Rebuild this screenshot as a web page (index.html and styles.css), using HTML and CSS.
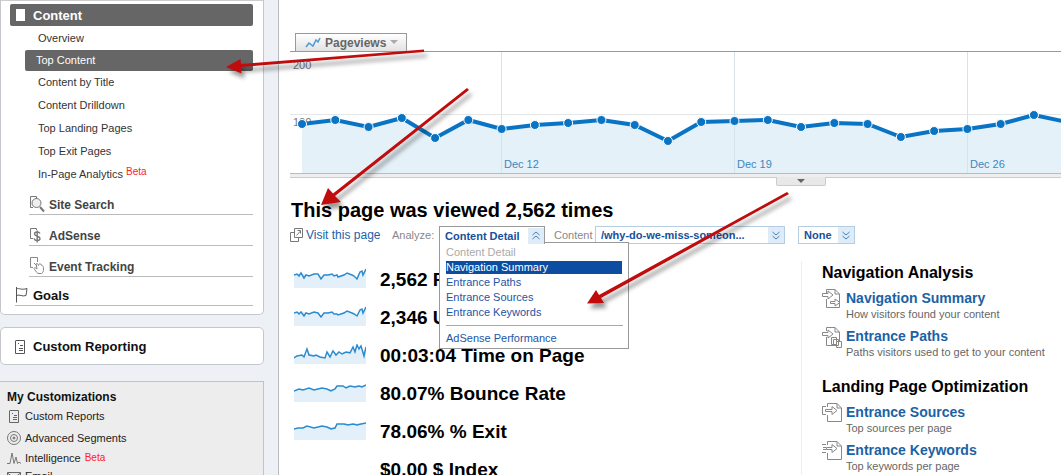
FILE: index.html
```
<!DOCTYPE html>
<html lang="en">
<head>
    <meta charset="UTF-8">
    <meta name="viewport" content="width=device-width, initial-scale=1.0">
    <title>Content Detail - Analytics</title>
    <link rel="stylesheet" href="styles.css">
</head>
<body>

<div class="page">
    <aside class="sidebar">
        <nav class="panel report-nav">
            <a href="#" class="section-link active">
                <svg class="icon" width="12" height="14"><rect x="1" y="1" width="9" height="12" fill="#fff"/></svg>
                Content
            </a>
            <ul class="sub-links">
                <li><a href="#">Overview</a></li>
                <li class="selected"><a href="#">Top Content</a></li>
                <li><a href="#">Content by Title</a></li>
                <li><a href="#">Content Drilldown</a></li>
                <li><a href="#">Top Landing Pages</a></li>
                <li><a href="#">Top Exit Pages</a></li>
                <li><a href="#">In-Page Analytics <sup class="beta">Beta</sup></a></li>
            </ul>
            <a href="#" class="group-link">
                <svg class="icon" width="16" height="18" fill="none" stroke="#777">
                    <path d="M4 12.500H1.500V1.500H7.500V4"/>
                    <circle cx="7.500" cy="8" r="4.500" fill="#e4e4e4" fill-opacity=".6"/>
                    <path d="M11 12l4 4.500" stroke-width="2"/>
                </svg>
                Site Search
            </a>
            <a href="#" class="group-link">
                <svg class="icon" width="16" height="18" fill="none" stroke="#777">
                    <path d="M4 12.500H1.500V2.500H7.500V4"/>
                    <path d="M11 7.500C10 5.500 5.500 5.500 5.500 8S11 10 11 12.500S6 15.500 5 12.500M8.200 4.500V16.500" stroke-width="1.400"/>
                </svg>
                AdSense
            </a>
            <a href="#" class="group-link">
                <svg class="icon" width="16" height="18" fill="none" stroke="#888">
                    <path d="M4 10.500H1.500V.5H8.500V5"/>
                    <path d="M5 6l3 3M9 16.500C7 15 6 13 5 11.500C5.500 10 7 11 8 12L7 7C8 5.500 9 7 9.500 8.500C10 6 12 6.500 12 8C14 8 14.500 10 14.500 12C14.500 14 14 16 12.500 16.500Z" fill="#fff"/>
                </svg>
                Event Tracking
            </a>
            <a href="#" class="section-link goals">
                <svg class="icon" width="14" height="16" fill="none" stroke="#555">
                    <path d="M1.500 0V15.500M1.500 2C4 .5 6 3.500 12 1.500L11 8.500C7 10 5 7 1.500 8.500"/>
                </svg>
                Goals
            </a>
        </nav>

        <div class="panel reporting">
            <a href="#" class="section-link">
                <svg class="icon" width="12" height="14" fill="none" stroke="#555">
                    <path d="M1 .5H9.500V13.500H.5V.5M3 3.500H4M5 5.500H8M4 8.500H8M4 10.500H8"/>
                </svg>
                Custom Reporting
            </a>
        </div>

        <div class="customizations">
            <h2>My Customizations</h2>
            <ul>
                <li><a href="#">
                    <svg class="icon" width="14" height="14" fill="none" stroke="#666">
                        <path d="M3 1.500H11.500V13.500H2.500V1.500M5 4.500H6M7 6.500H10M6 8.500H10M6 10.500H10"/>
                    </svg>
                    Custom Reports
                </a></li>
                <li><a href="#">
                    <svg class="icon" width="14" height="14" fill="none" stroke="#777">
                        <circle cx="7" cy="7" r="6.500"/><circle cx="7" cy="7" r="3.500"/><circle cx="7" cy="7" r="1" fill="#777"/>
                    </svg>
                    Advanced Segments
                </a></li>
                <li class="compact"><a href="#">
                    <svg class="icon" width="14" height="14" fill="none" stroke="#777">
                        <path d="M0 12.500H3L5 2L7 12.500L9 6L10.500 12.500L12 11L14 12.500"/>
                    </svg>
                    Intelligence <sup class="beta">Beta</sup>
                </a></li>
                <li class="compact"><a href="#">
                    <svg class="icon" width="14" height="14" fill="none" stroke="#666">
                        <path d="M.5 3.500H13.500V12.500H.5ZM.5 4L7 9L13.500 4"/>
                    </svg>
                    Email
                </a></li>
            </ul>
        </div>
    </aside>

    <main class="report">
        <button type="button" class="graph-tab">
            <svg width="16" height="12" fill="none" stroke="#4d9bd3" stroke-width="1.500"><path d="M1 10L4 6L8 9L11 3L13 5L15 1"/></svg>
            Pageviews
            <svg width="8" height="5"><path d="M0 0H8L4 4Z" fill="#aaa"/></svg>
        </button>

        <svg class="graph" role="img" aria-label="Pageviews per day">
            <path class="grid-line" d="M0 62.500H2000"/>
            <text class="scale" x="3" y="17">200</text>
            <text class="scale" x="3" y="74">100</text>
            <path id="graphArea" class="graph-area"/>
            <path class="grid-line week" d="M211.500 0V122M444.500 0V122M677.500 0V122"/>
            <polyline id="graphLine" class="graph-line"/>
            <g id="graphPoints" class="graph-points"></g>
            <text class="date" x="214" y="116">Dec 12</text>
            <text class="date" x="447" y="116">Dec 19</text>
            <text class="date" x="680" y="116">Dec 26</text>
        </svg>
        <div class="graph-bar">
            <button type="button" class="graph-handle" aria-label="Toggle graph">
                <svg width="8" height="4"><path d="M0 0H8L4 4Z" fill="#666"/></svg>
            </button>
        </div>

        <h1>This page was viewed 2,562 times</h1>

        <div class="toolbar">
            <a href="#" class="visit">
                <svg width="13" height="14" fill="none" stroke="#777">
                    <path d="M4 4.500H.5V13.500H8.500V10"/><path d="M4.500 .5H12.500V9.500H4.500ZM6.500 7.500L10.500 3M7.500 2.500H10.500V5.500"/>
                </svg>
                Visit this page
            </a>
            <span class="label">Analyze:</span>
            <div class="dropdown">
                <button type="button" class="dropdown-button" aria-expanded="true">
                    <span>Content Detail</span>
                    <span class="chevrons"><svg width="8" height="9" fill="none" stroke="#4b80b5"><path d="M.5 4L4 1L7.500 4M.5 8L4 5L7.500 8"/></svg></span>
                </button>
                <ul class="dropdown-menu">
                    <li class="current">Content Detail</li>
                    <li class="hover"><a href="#">Navigation Summary</a></li>
                    <li><a href="#">Entrance Paths</a></li>
                    <li><a href="#">Entrance Sources</a></li>
                    <li><a href="#">Entrance Keywords</a></li>
                    <li class="separated"><a href="#">AdSense Performance</a></li>
                </ul>
            </div>
            <label class="label content-label" for="contentSelect">Content</label>
            <div class="select-box content-select">
                <select id="contentSelect">
                    <option>/why-do-we-miss-someon...</option>
                </select>
                <span class="chevrons"><svg width="8" height="9" fill="none" stroke="#4b80b5"><path d="M.5 1L4 4L7.500 1M.5 5L4 8L7.500 5"/></svg></span>
            </div>
            <div class="select-box segment-select">
                <select aria-label="Segment">
                    <option>None</option>
                </select>
                <span class="chevrons"><svg width="8" height="9" fill="none" stroke="#4b80b5"><path d="M.5 1L4 4L7.500 1M.5 5L4 8L7.500 5"/></svg></span>
            </div>
        </div>

        <div class="details">
            <ul class="metrics">
                <li>
                    <svg class="spark" width="72" height="20"><path class="fill" d="M0 6L5 6L7 9L10 5L12 9L20 6L27 10L30 6L38 7L42 9L52 5L62 10L66 3L69 7L72 1V20H0Z"/><path d="M0 7L3 6L5 8L7 5L10 10L12 7L15 8L20 6L24 6L27 11L30 7L34 7L38 6L40 8L43 7L44 9L50 7L53 5L58 7L60 8L63 11L66 4L68 3L69 7L72 1"/></svg>
                    2,562 Pageviews
                </li>
                <li>
                    <svg class="spark" width="72" height="20"><path class="fill" d="M0 6L5 6L7 9L10 5L12 9L20 6L27 10L30 6L38 7L42 9L52 5L62 10L66 3L69 7L72 1V20H0Z"/><path d="M0 7L3 6L5 8L7 6L10 10L12 7L15 8L20 6L24 7L27 11L30 7L34 7L38 6L40 8L43 8L44 9L50 7L53 5L58 7L60 8L63 10L66 4L68 3L69 7L72 1"/></svg>
                    2,346 Unique Pageviews
                </li>
                <li>
                    <svg class="spark" width="72" height="20"><path class="fill" d="M0 13L12 11L14 8L20 11L30 14L35 11L45 10L56 6L66 6L72 8V20H0Z"/><path d="M0 14L3 12L8 11L10 13L13 5L15 11L20 12L22 11L26 13L31 14L33 8L36 13L39 7L42 11L45 8L48 10L52 8L56 9L59 3L61 8L63 1L65 5L67 2L70 12L72 3"/></svg>
                    00:03:04 Time on Page
                </li>
                <li>
                    <svg class="spark" width="72" height="20"><path class="fill" d="M0 8L20 7L40 7L44 4L72 3V20H0Z"/><path d="M0 9L5 7L9 8L15 6L20 8L28 6L33 7L37 9L41 7L43 4L49 4L52 6L56 4L61 5L65 4L68 5L72 3"/></svg>
                    80.07% Bounce Rate
                </li>
                <li>
                    <svg class="spark" width="72" height="20"><path class="fill" d="M0 8L20 7L40 7L44 4L72 3V20H0Z"/><path d="M0 9L4 8L9 8L13 6L20 8L28 6L33 7L37 9L41 8L43 4L50 4L54 5L59 4L63 5L67 4L72 3"/></svg>
                    78.06% % Exit
                </li>
                <li>
                    <svg class="spark" width="72" height="20"></svg>
                    $0.00 $ Index
                </li>
            </ul>

            <div class="analysis">
                <h2>Navigation Analysis</h2>
                <ul>
                    <li>
                        <svg width="20" height="20" fill="none" stroke="#888">
                            <path d="M4.500 4V.5H13L17.500 5V18.500H4.500V10M13 .5V5H17"/>
                            <path d="M.5 4.500H6V2L11 6L6 10V7.500H.5ZM8.500 12.500H13V10L18 13.500L13 17V14.500H8.500Z" fill="#fff"/>
                        </svg>
                        <div><a href="#">Navigation Summary</a><p>How visitors found your content</p></div>
                    </li>
                    <li>
                        <svg width="20" height="21" fill="none" stroke="#888">
                            <path d="M4.500 4V.5H13L17.500 5V18.500H4.500V10M13 .5V5H17"/>
                            <path d="M.5 5.500H6V3L11 7L6 11V8.500H.5ZM9.500 10.500H14.500V17.500H9.500ZM11.500 12.500H16.500V18.500H11.500ZM14.500 14.500H19.500V20.500H14.500Z" fill="#fff"/>
                        </svg>
                        <div><a href="#">Entrance Paths</a><p>Paths visitors used to get to your content</p></div>
                    </li>
                </ul>
                <h2>Landing Page Optimization</h2>
                <ul>
                    <li>
                        <svg width="20" height="20" fill="none" stroke="#888">
                            <path d="M5.500 4V.5H15L19.500 5V18.500H5.500V12M15 .5V5H19M4 3.500H.5V11.500H4"/>
                            <path d="M3.500 6.500H10V3.500L15 7.500L10 11.500V8.500H3.500Z" fill="#fff"/>
                        </svg>
                        <div><a href="#">Entrance Sources</a><p>Top sources per page</p></div>
                    </li>
                    <li>
                        <svg width="20" height="20" fill="none" stroke="#888">
                            <path d="M5.500 4V.5H15L19.500 5V18.500H5.500V12M15 .5V5H19M0 3.500H4M1 6.500H4M1 8.500H4M0 11.500H4"/>
                            <path d="M4.500 6.500H10V3.500L15 7.500L10 11.500V8.500H4.500Z" fill="#fff"/>
                        </svg>
                        <div><a href="#">Entrance Keywords</a><p>Top keywords per page</p></div>
                    </li>
                </ul>
            </div>
        </div>
    </main>

    <!-- Callout arrows over the report -->
    <svg class="arrows" aria-hidden="true">
        <path d="M424 49.500L241 64L240.500 59L226 67L241.500 73.500L241 67L424 52Z"/>
        <path d="M467 88L333 193.500L328 188L321 205L341 202L335 196L469 90Z"/>
        <path d="M787 192L599 295L596 290L587 303.500L604 303L601 298L789 194Z"/>
    </svg>
</div>

<script>
    // Daily pageviews, as heights inside the graph
    const heights = [72, 68, 75, 66, 86, 68, 77, 73, 71, 68, 73, 89, 70, 69, 68, 75, 71, 72, 85, 79, 77, 72, 63, 70];
    const step = 33.27;
    const points = heights.map((y, i) => [12 + i * step, y]);
    const line = points.map(p => p.join(',')).join(' ');

    document.getElementById('graphLine').setAttribute('points', line);
    document.getElementById('graphArea').setAttribute('d', 'M12,122 L' + line + ' V122 Z');

    points.forEach(([x, y]) => {
        const dot = document.createElementNS('http://www.w3.org/2000/svg', 'circle');
        dot.setAttribute('cx', x);
        dot.setAttribute('cy', y);
        dot.setAttribute('r', 4.5);
        document.getElementById('graphPoints').appendChild(dot);
    });
</script>

</body>
</html>
```
FILE: styles.css
```
* {
    box-sizing: border-box;
}
body {
    margin: 0;
    font-family: "Liberation Sans", Arial, sans-serif;
    font-size: 11px;
    color: #333;
    background: #fff;
    overflow: hidden;
}
h1, h2, p, ul {
    margin: 0;
    padding: 0;
}
ul {
    list-style: none;
}
a {
    color: inherit;
    text-decoration: none;
}
svg {
    display: block;
    flex: none;
}
button, select {
    font-family: inherit;
    margin: 0;
    border-radius: 0;
    cursor: pointer;
}
.page {
    position: relative;
    display: flex;
    height: 100vh;
}

/* Sidebar */
.sidebar {
    flex: 0 0 279px;
    padding-right: 14px;
    background: #edf0f5;
    border-right: 1px solid #b8bbc0;
}
.panel {
    background: #fff;
    border: 1px solid #c3c6cb;
    border-radius: 5px;
}
.report-nav {
    padding: 3px 10px 8px 9px;
    border-top: 1px solid #ccc;
    border-radius: 0 0 5px 5px;
}
.section-link {
    display: flex;
    align-items: center;
    gap: 6px;
    font-size: 13px;
    font-weight: bold;
    color: #111;
}
.section-link.active {
    height: 22px;
    padding-left: 5px;
    color: #fff;
    background: #666;
    border-radius: 2px;
}
.sub-links {
    padding-top: 1px;
}
.sub-links li {
    height: 23px;
    margin-left: 15px;
    padding-left: 13px;
    line-height: 23px;
}
.sub-links .selected {
    height: 21px;
    padding-left: 11px;
    line-height: 21px;
    color: #fff;
    background: #666;
    border-radius: 2px;
}
.beta {
    font-size: 10px;
    line-height: 1;
    color: #f22;
    vertical-align: 3px;
}
.group-link {
    display: flex;
    align-items: flex-end;
    gap: 4px;
    height: 31px;
    margin-left: 19px;
    padding-bottom: 1px;
    border-bottom: 1px solid #bbb;
    font-size: 12px;
    line-height: 16px;
    font-weight: bold;
    color: #444;
}
.sub-links + .group-link {
    height: 29px;
}
.goals {
    height: 29px;
    margin-left: 5px;
    padding-top: 8px;
    gap: 4px;
    border-bottom: 1px solid #bbb;
}
.reporting {
    margin-top: 12px;
    padding: 11px 14px 10px;
}
.customizations {
    margin-top: 16px;
    padding: 7px 7px 12px;
    background: #ededed;
    border: 1px solid #c0c3c8;
    border-left: none;
}
.customizations h2 {
    font-size: 12px;
    line-height: 16px;
    color: #111;
}
.customizations li {
    height: 22px;
}
.customizations a {
    display: flex;
    align-items: center;
    gap: 4px;
    height: 22px;
    color: #222;
}
.customizations .compact, .customizations .compact a {
    height: 18px;
}

/* Graph */
.report {
    flex: 1;
    min-width: 0;
    padding: 33px 0 0 11px;
}
.graph-tab {
    display: flex;
    align-items: center;
    gap: 4px;
    height: 18px;
    margin-left: 5px;
    padding: 0 8px 0 9px;
    font-size: 12px;
    font-weight: bold;
    color: #666;
    background: linear-gradient(#fff, #e2e2e2);
    border: 1px solid #999;
    border-bottom: none;
}
.graph {
    width: 100%;
    height: 122px;
    border-top: 1px solid #999;
}
.grid-line {
    fill: none;
    stroke: #e4e6e8;
}
.week {
    stroke: #d9e2e8;
}
.scale {
    font-size: 11px;
    fill: #777;
}
.date {
    font-size: 11px;
    fill: #3c87bd;
}
.graph-area {
    fill: #e5f1f9;
}
.graph-line {
    fill: none;
    stroke: #0a74c4;
    stroke-width: 4;
}
.graph-points {
    fill: #0a74c4;
    stroke: #fff;
}
.graph-bar {
    height: 5px;
    background: #eee;
    border-top: 1px solid #bbb;
    border-bottom: 1px solid #ccc;
}
.graph-handle {
    display: flex;
    align-items: center;
    justify-content: center;
    position: relative;
    top: 3px;
    width: 50px;
    height: 9px;
    margin-left: 63%;
    padding: 0;
    background: #e8e8e8;
    border: 1px solid #ccc;
    border-top: none;
    border-radius: 0 0 2px 2px;
}

/* Toolbar */
h1 {
    margin-top: 20px;
    padding-left: 1px;
    font-size: 20px;
    line-height: 24px;
    color: #000;
}
.toolbar {
    display: flex;
    align-items: center;
    height: 18px;
    margin-top: 4px;
    white-space: nowrap;
}
.visit {
    display: flex;
    align-items: center;
    gap: 3px;
    width: 102px;
    font-size: 12px;
    color: #1b62a5;
}
.label {
    width: 47px;
    color: #888;
}
.content-label {
    width: 41px;
    margin-left: 9px;
}
.dropdown {
    position: relative;
}
.dropdown-button {
    position: relative;
    z-index: 2;
    display: flex;
    align-items: center;
    justify-content: space-between;
    width: 106px;
    height: 18px;
    padding: 0 0 0 5px;
    font-size: 11px;
    font-weight: bold;
    color: #174f9c;
    background: #fff;
    border: 1px solid #999;
    border-bottom: none;
}
.chevrons {
    display: flex;
    align-items: center;
    justify-content: center;
    width: 16px;
    height: 16px;
    background: #ddecf8;
}
.dropdown-menu {
    position: absolute;
    top: 16px;
    left: 0;
    z-index: 1;
    width: 190px;
    padding: 2px 5px 2px 6px;
    font-size: 11px;
    line-height: 15px;
    color: #1d55a5;
    background: #fff;
    border: 1px solid #999;
}
.dropdown-menu .current {
    color: #aaa;
}
.dropdown-menu .hover {
    margin: 1px 1px 1px 0;
    line-height: 13px;
    color: #fff;
    background: #0c4da2;
}
.dropdown-menu .separated {
    margin-top: 5px;
    padding-top: 5px;
    border-top: 1px solid #aaa;
}
.select-box {
    position: relative;
    height: 18px;
}
.select-box select {
    display: block;
    width: 100%;
    height: 18px;
    padding: 0 18px 0 5px;
    font-size: 11px;
    font-weight: bold;
    color: #174f9c;
    background: #fff;
    border: 1px solid #b5cde0;
    appearance: none;
}
.select-box .chevrons {
    position: absolute;
    top: 1px;
    right: 1px;
    pointer-events: none;
}
.content-select {
    width: 190px;
}
.segment-select {
    width: 57px;
    margin-left: 13px;
}

/* Metrics and related reports */
.details {
    display: grid;
    grid-template-columns: 1fr 260px;
    margin-top: 17px;
}
.metrics li {
    display: flex;
    align-items: center;
    gap: 14px;
    height: 38px;
    padding-left: 4px;
    font-size: 19px;
    font-weight: bold;
    color: #000;
}
.spark {
    margin-bottom: 4px;
    fill: none;
    stroke: #2c8bcf;
    stroke-width: 1.5;
}
.spark .fill {
    fill: #e3f0f9;
    stroke: none;
}
.analysis {
    padding-left: 20px;
    border-left: 1px solid #eee;
}
.analysis h2 {
    font-size: 16px;
    line-height: 24px;
    color: #000;
}
.analysis ul {
    padding-top: 4px;
    margin-bottom: 10px;
}
.analysis li {
    display: flex;
    gap: 4px;
    height: 38px;
}
.analysis a {
    font-size: 14px;
    line-height: 18px;
    font-weight: bold;
    color: #1b62a5;
}
.analysis p {
    line-height: 14px;
    color: #666;
}

.arrows {
    position: absolute;
    top: 0;
    left: 0;
    z-index: 3;
    width: 100%;
    height: 100%;
    fill: #c00c0c;
    pointer-events: none;
    filter: drop-shadow(3px 5px 2px rgba(0, 0, 0, 0.4));
}
```
